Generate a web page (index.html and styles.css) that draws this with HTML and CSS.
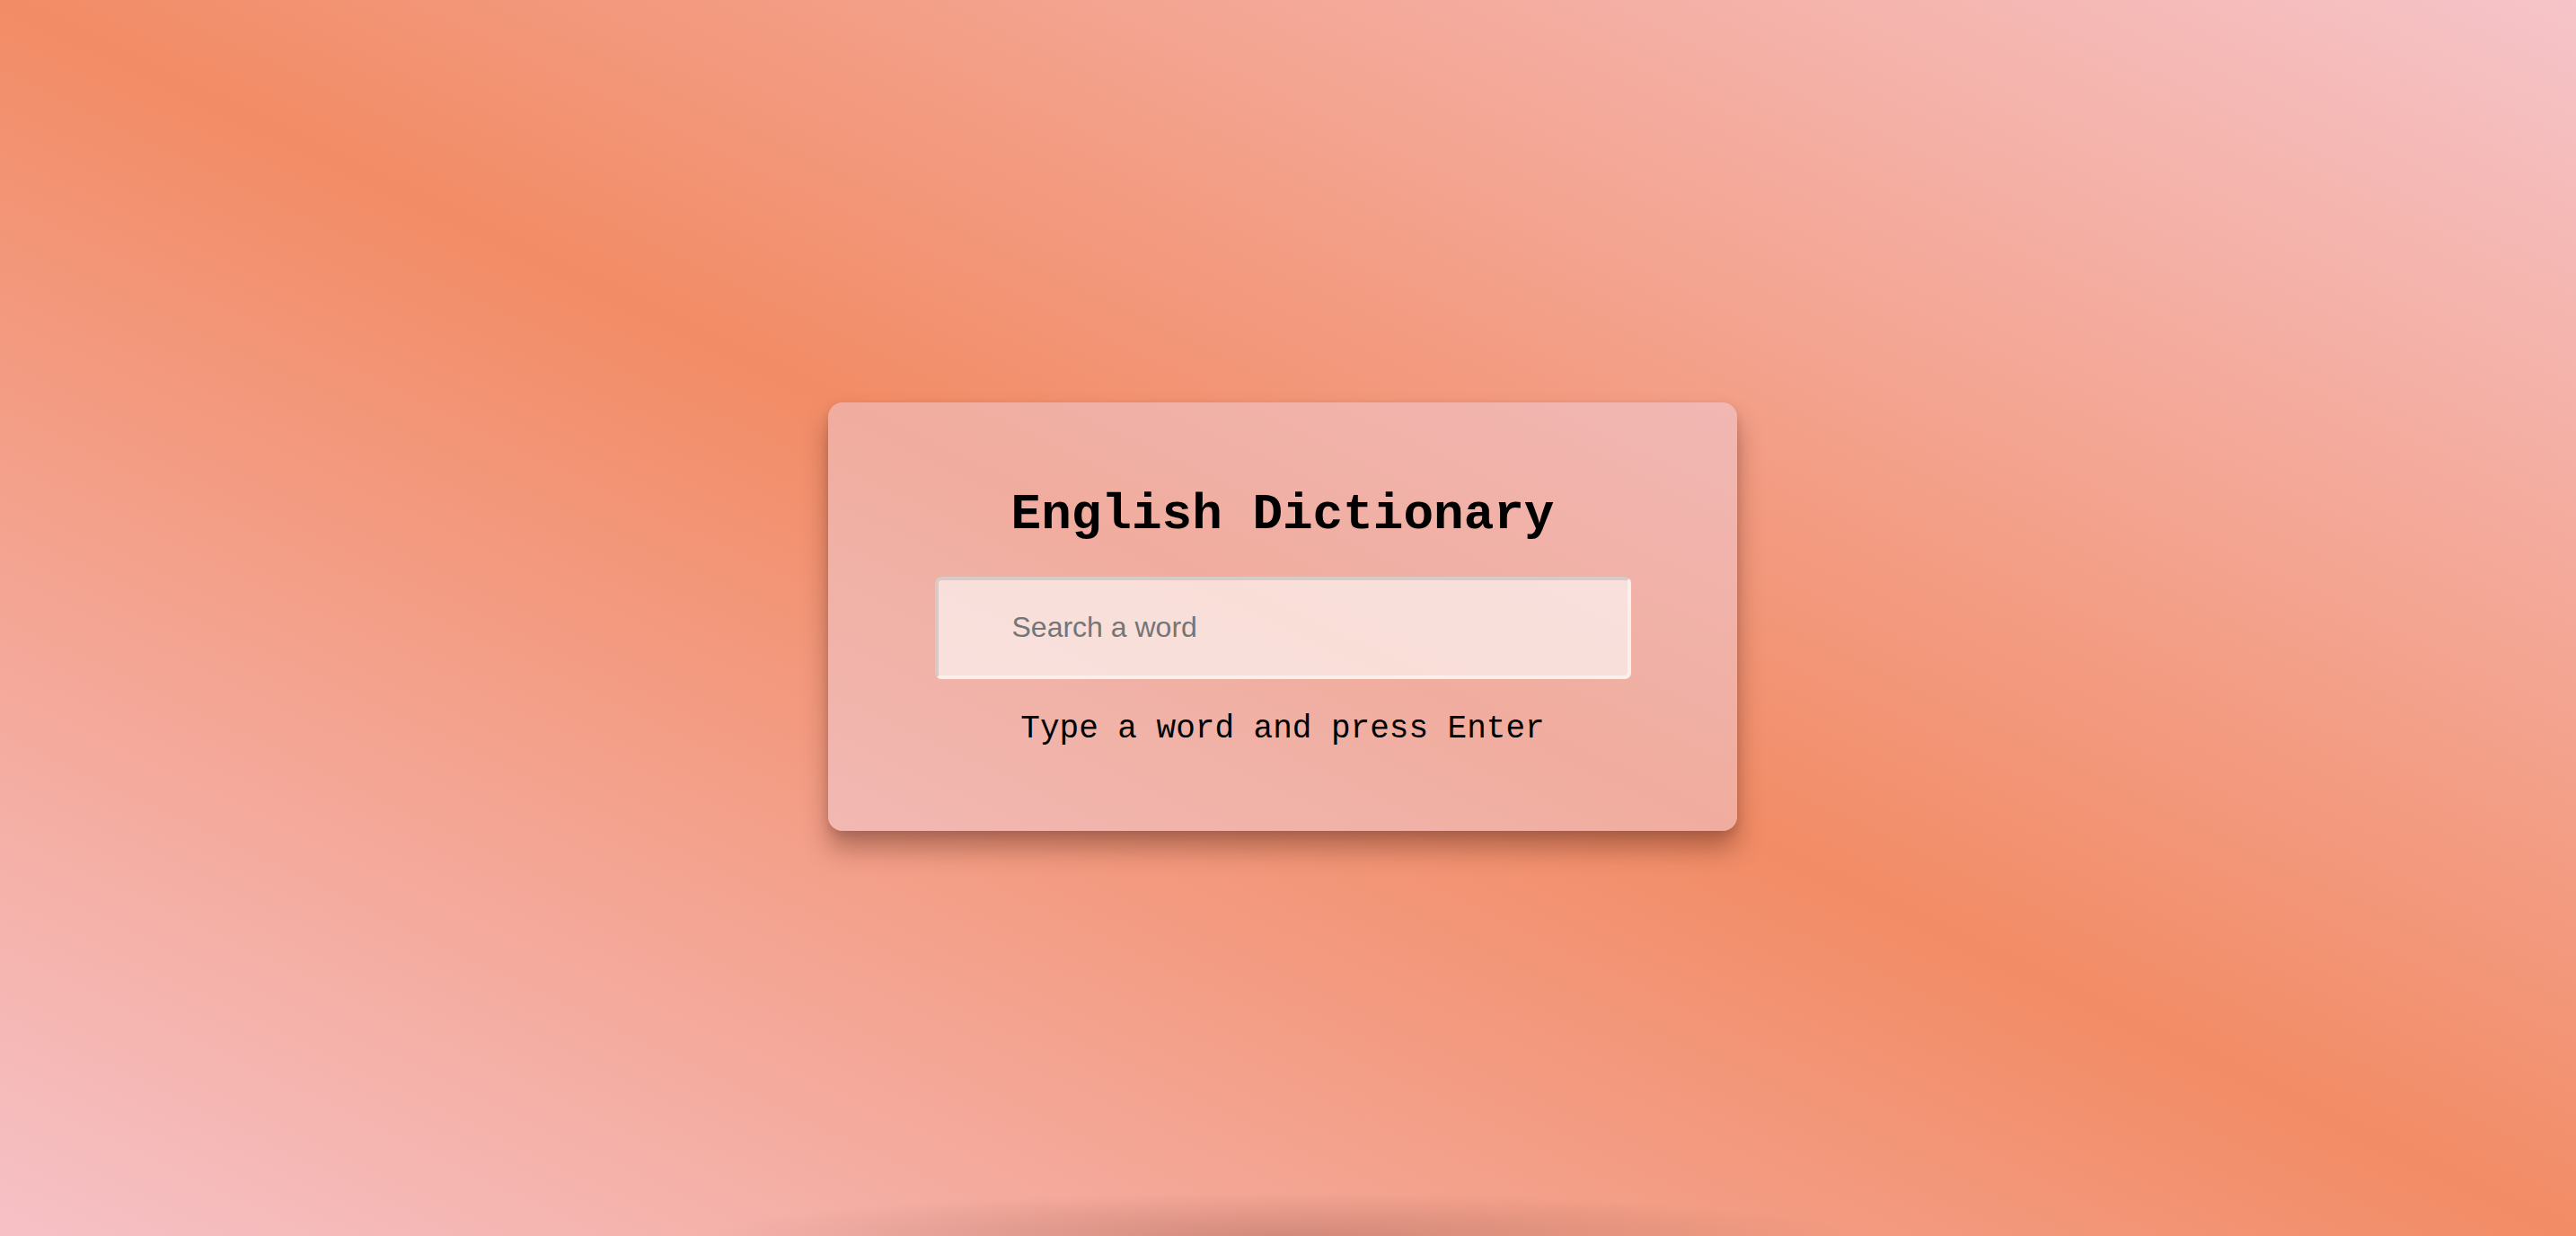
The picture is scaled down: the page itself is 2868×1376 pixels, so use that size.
FILE: index.html
```html
<!DOCTYPE html>
<html lang="en">
<head>
<meta charset="utf-8">
<title>English Dictionary</title>
<link rel="stylesheet" href="styles.css">
</head>
<body>
<main class="page">
  <section class="card">
    <h1 class="title">English Dictionary</h1>
    <input class="search" type="text" placeholder="Search a word">
    <p class="info">Type a word and press Enter</p>
  </section>
</main>
</body>
</html>
```
FILE: styles.css
```css
html, body {
  margin: 0;
  padding: 0;
  height: 100%;
  overflow: hidden;
}
body {
  background:
    radial-gradient(ellipse 640px 48px at 49.8% 100%, rgba(90, 35, 25, 0.22), rgba(90, 35, 25, 0) 100%),
    linear-gradient(to top right, #f6c1c6 0%, #f28c66 50%, #f6c4c9 100%);
  font-family: "Liberation Mono", "Courier New", monospace;
}
.page {
  height: 100vh;
  display: flex;
  align-items: center;
  justify-content: center;
  padding: 0 12px 4px 0;
  box-sizing: border-box;
}
.card {
  width: 1012px;
  box-sizing: border-box;
  padding: 93px 0 93px;
  display: flex;
  flex-direction: column;
  align-items: center;
  border-radius: 16px;
  background: linear-gradient(to top right, #f2b8b2 0%, #f0ad9f 50%, #f2b7b3 100%);
  box-shadow: 0 20px 28px rgba(60, 20, 10, 0.35), 0 4px 10px rgba(60, 20, 10, 0.12);
}
.title {
  margin: 0;
  font-size: 56px;
  line-height: 64px;
  font-weight: 700;
  color: #000;
}
.search {
  margin-top: 37px;
  width: 775px;
  height: 114px;
  box-sizing: border-box;
  padding: 0 82px;
  border: 4px solid;
  border-color: #d8cac6 #fbefec #fbefec #d8cac6;
  border-radius: 7px;
  background: rgba(255, 255, 255, 0.6);
  font-family: "Liberation Sans", Arial, sans-serif;
  font-size: 32px;
  color: #333;
  outline: none;
}
.search::placeholder {
  color: #757575;
}
.info {
  margin: 36px 0 0;
  font-size: 36px;
  line-height: 40px;
  color: #000;
}
```
